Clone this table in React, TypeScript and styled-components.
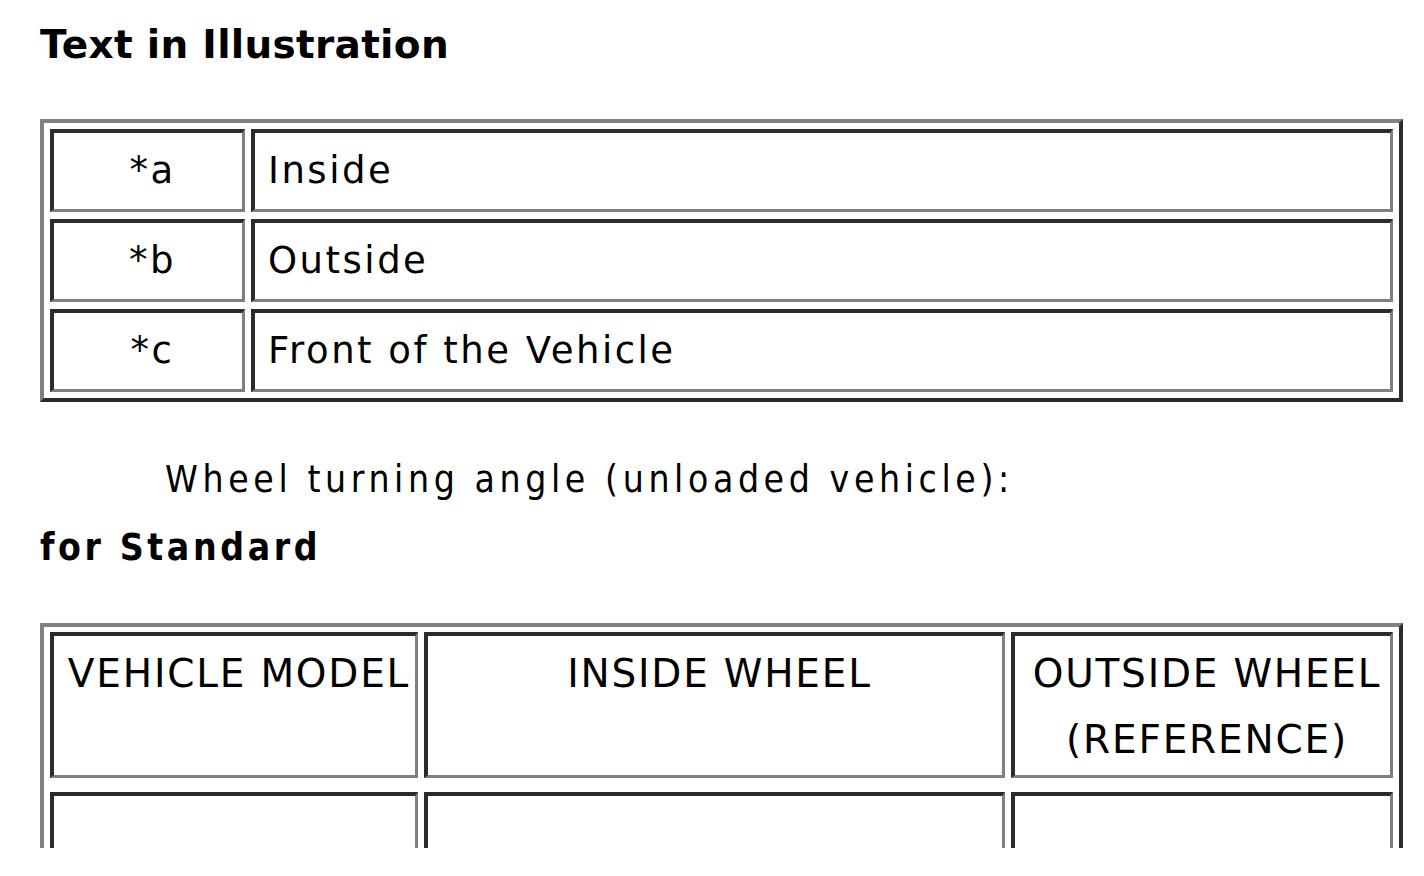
import styled, {createGlobalStyle} from 'styled-components';
import {Fragment} from 'react';

const GlobalStyle = createGlobalStyle`
  html, body {
    margin: 0;
    padding: 0;
    background: #ffffff;
  }
  body {
    font-family: "DejaVu Sans", Verdana, sans-serif;
    color: #000000;
  }
`;

const DARK = '#2b2b2b';
const LIGHT = '#808080';

const Page = styled.div`
  width: 1424px;
  height: 848px;
  overflow: hidden;
  padding-left: 40px;
  box-sizing: border-box;
`;

const Heading = styled.h2`
  margin: 0;
  padding-top: 22px;
  font-size: 39px;
  line-height: 46px;
  font-weight: bold;
  letter-spacing: 0.3px;
`;

const SubHeading = styled.h3`
  margin: 22px 0 0;
  font-family: "DejaVu Sans Condensed", "DejaVu Sans", sans-serif;
  font-size: 37px;
  line-height: 46px;
  font-weight: bold;
  letter-spacing: 3.6px;
`;

const Note = styled.p`
  margin: 55px 0 0;
  padding-left: 125px;
  font-family: "DejaVu Sans Condensed", "DejaVu Sans", sans-serif;
  font-size: 37px;
  line-height: 46px;
  letter-spacing: 4.6px;
`;

const Frame = styled.div<{$cols: string; $rowGap: number; $padTop: number; $top: number}>`
  display: grid;
  grid-template-columns: ${(p) => p.$cols};
  column-gap: 6px;
  row-gap: ${(p) => p.$rowGap}px;
  width: 1363px;
  box-sizing: border-box;
  margin-top: ${(p) => p.$top}px;
  padding: ${(p) => p.$padTop}px 6px 6px;
  border-style: solid;
  border-width: 4px;
  border-color: ${LIGHT} ${DARK} ${DARK} ${LIGHT};
`;

const Cell = styled.div<{$height: number; $align?: 'center' | 'left'; $top?: boolean}>`
  box-sizing: border-box;
  height: ${(p) => p.$height}px;
  display: flex;
  flex-direction: column;
  justify-content: ${(p) => (p.$top ? 'flex-start' : 'center')};
  align-items: ${(p) => (p.$align === 'left' ? 'flex-start' : 'center')};
  padding: ${(p) => (p.$top ? '5px 3px 0 12px' : p.$align === 'left' ? '0 0 0 13px' : '0 0 0 9px')};
  border-style: solid;
  border-width: 4px 3px 3px 4px;
  border-color: ${DARK} ${LIGHT} ${LIGHT} ${DARK};
  font-size: ${(p) => (p.$top ? 39 : 37)}px;
  line-height: ${(p) => (p.$top ? 66 : 44)}px;
  letter-spacing: ${(p) => (p.$top ? 1.8 : 2.5)}px;
  text-align: center;
  white-space: nowrap;
`;

const legend = [
  {mark: '*a', text: 'Inside'},
  {mark: '*b', text: 'Outside'},
  {mark: '*c', text: 'Front of the Vehicle'},
];

const headers = [['VEHICLE MODEL'], ['INSIDE WHEEL'], ['OUTSIDE WHEEL', '(REFERENCE)']];

export default function App() {
  return (
    <>
      <GlobalStyle />
      <Page>
        <Heading>Text in Illustration</Heading>
        <Frame $cols="195px 1142px" $rowGap={7} $padTop={6} $top={51}>
          {legend.map((row) => (
            <Fragment key={row.mark}>
              <Cell $height={83}>{row.mark}</Cell>
              <Cell $height={83} $align="left">
                {row.text}
              </Cell>
            </Fragment>
          ))}
        </Frame>
        <Note>Wheel turning angle (unloaded vehicle):</Note>
        <SubHeading>for Standard</SubHeading>
        <Frame $cols="368px 581px 382px" $rowGap={14} $padTop={5} $top={52}>
          {headers.map((lines) => (
            <Cell key={lines[0]} $height={146} $top>
              {lines.map((l) => (
                <span key={l}>{l}</span>
              ))}
            </Cell>
          ))}
          {headers.map((lines) => (
            <Cell key={`body-${lines[0]}`} $height={140} />
          ))}
        </Frame>
      </Page>
    </>
  );
}
